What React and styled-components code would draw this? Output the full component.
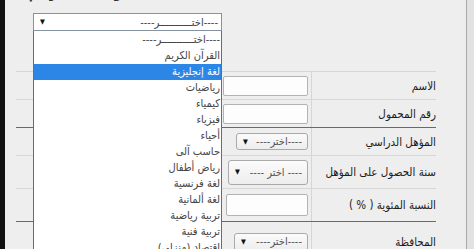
import React from 'react';
import styled, { createGlobalStyle, css } from 'styled-components';

const GlobalStyle = createGlobalStyle`
  html, body {
    margin: 0;
    padding: 0;
  }
  body {
    width: 474px;
    height: 249px;
    overflow: hidden;
    background: #eeeeee;
    font-family: Tahoma, "DejaVu Sans Condensed", "DejaVu Sans", sans-serif;
  }
`;

const Screen = styled.div`
  display: flex;
  height: 249px;
`;

const Bezel = styled.div`
  width: 5px;
  flex-shrink: 0;
  background: #111;
`;

const Main = styled.div`
  flex: 1;
  position: relative;
  overflow: hidden;
  background: #eeeeee;
`;

const Edge = styled.div`
  width: 7px;
  flex-shrink: 0;
  border-left: 1px solid #a9a9a9;
  background: #e2e2e2;
`;

const TitleClip = styled.div`
  height: 5px;
  overflow: hidden;
  display: flex;
  gap: 46px;
  padding-left: 24px;
`;

const TitleText = styled.span`
  display: block;
  margin-top: -15px;
  font-size: 13px;
  font-weight: bold;
  line-height: 18px;
  color: #333;
  direction: rtl;
`;

const SelectWrap = styled.div`
  position: relative;
  width: 189px;
  margin: 8px 0 0 28px;
`;

const ClosedSelect = styled.div`
  height: 18px;
  box-sizing: border-box;
  border: 1px solid #8593a0;
  background: #fff;
  display: flex;
  align-items: center;
  justify-content: space-between;
  padding: 0 3px 0 6px;
  font-size: 11px;
  color: #444;
`;

const Arrow = styled.span`
  font-size: 7px;
  color: #111;
`;

const OptionList = styled.ul`
  position: absolute;
  top: 100%;
  left: 0;
  z-index: 2;
  width: 189px;
  height: 240px;
  box-sizing: border-box;
  margin: 0;
  padding: 1px 0 0;
  list-style: none;
  background: #fff;
  border: 1px solid #6c6c6c;
  border-top: none;
  direction: rtl;
`;

const Option = styled.li`
  height: 16px;
  line-height: 16px;
  padding-right: 1px;
  font-size: 11px;
  color: #444;
  white-space: nowrap;
  ${(p) =>
    p.$active &&
    css`
      background: #2b86e6;
      color: #fff;
    `}
`;

const FormTable = styled.div`
  width: 420px;
  margin: 40px 0 0 11px;
  direction: rtl;
`;

const Row = styled.div`
  display: grid;
  grid-template-columns: 125px 1fr;
  height: ${(p) => p.$h}px;
  box-sizing: border-box;
  border-top: 1px solid ${(p) => (p.$dark ? '#6a6a6a' : '#d6d6d6')};
`;

const LabelCell = styled.div`
  display: flex;
  align-items: center;
  border-left: 1px solid #d6d6d6;
  font-size: 11.5px;
  color: #1c1c1c;
  white-space: nowrap;
  overflow: hidden;
`;

const FieldCell = styled.div`
  display: flex;
  align-items: center;
  padding-right: 3px;
`;

const TextInput = styled.div`
  width: ${(p) => p.$w}px;
  height: ${(p) => p.$h}px;
  box-sizing: border-box;
  border: 1px solid #b3b3b3;
  border-radius: 2px;
  background: #fdfdfd;
`;

const SmallSelect = styled.div`
  width: ${(p) => p.$w}px;
  height: ${(p) => p.$h}px;
  box-sizing: border-box;
  border: 1px solid #aaaaaa;
  border-radius: 3px;
  background: linear-gradient(#fbfbfb, #ededed);
  display: flex;
  align-items: center;
  justify-content: space-between;
  direction: ltr;
  padding: 0 5px 0 6px;
  font-size: 11px;
  color: #555;
`;

const subjects = [
  '----اختـــــــــــر----',
  'القرآن الكريم',
  'لغة إنجليزية',
  'رياضيات',
  'كيمياء',
  'فيزياء',
  'أحياء',
  'حاسب آلى',
  'رياض أطفال',
  'لغة فرنسية',
  'لغة ألمانية',
  'تربية رياضية',
  'تربية فنية',
  'اقتصاد (منزلى)',
];

function Picker({ w, h, text }) {
  return (
    <SmallSelect $w={w} $h={h}>
      <Arrow>▼</Arrow>
      <span>{text}</span>
    </SmallSelect>
  );
}

function App() {
  return (
    <>
      <GlobalStyle />
      <Screen>
        <Bezel />
        <Main>
          <TitleClip>
            <TitleText>ارقام</TitleText>
            <TitleText>و ا</TitleText>
          </TitleClip>

          <SelectWrap>
            <ClosedSelect>
              <Arrow>▼</Arrow>
              <span>{subjects[0]}</span>
            </ClosedSelect>
            <OptionList>
              {subjects.map((s, i) => (
                <Option key={s} $active={i === 2}>
                  {s}
                </Option>
              ))}
            </OptionList>
          </SelectWrap>

          <FormTable>
            <Row $h={28}>
              <LabelCell>الاسم</LabelCell>
              <FieldCell>
                <TextInput $w={85} $h={20} />
              </FieldCell>
            </Row>
            <Row $h={28}>
              <LabelCell>رقم المحمول</LabelCell>
              <FieldCell>
                <TextInput $w={85} $h={20} />
              </FieldCell>
            </Row>
            <Row $h={28} $dark>
              <LabelCell>المؤهل الدراسي</LabelCell>
              <FieldCell>
                <Picker w={72} h={17} text="----اختر----" />
              </FieldCell>
            </Row>
            <Row $h={33}>
              <LabelCell>سنة الحصول على المؤهل</LabelCell>
              <FieldCell>
                <Picker w={80} h={25} text="---- اختر ----" />
              </FieldCell>
            </Row>
            <Row $h={33}>
              <LabelCell>النسبة المئوية ( % )</LabelCell>
              <FieldCell>
                <TextInput $w={82} $h={22} />
              </FieldCell>
            </Row>
            <Row $h={40} $dark>
              <LabelCell>المحافظة</LabelCell>
              <FieldCell>
                <Picker w={74} h={18} text="----اختر----" />
              </FieldCell>
            </Row>
          </FormTable>
        </Main>
        <Edge />
      </Screen>
    </>
  );
}

export default App;
